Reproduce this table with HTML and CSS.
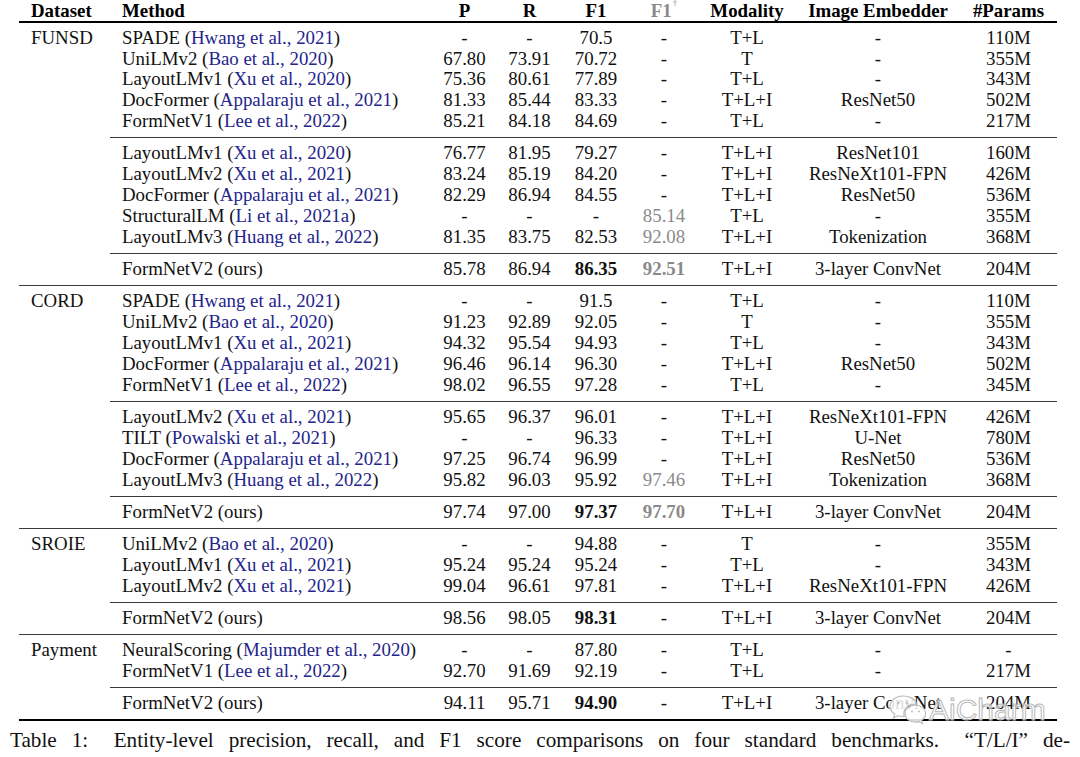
FILE: index.html
```html
<!DOCTYPE html>
<html lang="en">
<head>
<meta charset="utf-8">
<title>Table 1</title>
<link rel="stylesheet" href="styles.css">
</head>
<body>
<div class="page">
  <table class="results">
    <colgroup>
      <col class="c-ds"><col class="c-method"><col class="c-p"><col class="c-r"><col class="c-f1"><col class="c-f1d"><col class="c-mod"><col class="c-emb"><col class="c-par">
    </colgroup>
    <thead>
      <tr>
        <th class="l">Dataset</th><th class="l">Method</th><th>P</th><th>R</th><th>F1</th><th class="gray">F1<sup>†</sup></th><th>Modality</th><th>Image Embedder</th><th>#Params</th>
      </tr>
    </thead>
    <tbody>
      <tr class="first"><td class="l">FUNSD</td><td class="l">SPADE (<span class="cite">Hwang et al., 2021</span>)</td><td>-</td><td>-</td><td>70.5</td><td>-</td><td>T+L</td><td>-</td><td>110M</td></tr>
      <tr><td></td><td class="l">UniLMv2 (<span class="cite">Bao et al., 2020</span>)</td><td>67.80</td><td>73.91</td><td>70.72</td><td>-</td><td>T</td><td>-</td><td>355M</td></tr>
      <tr><td></td><td class="l">LayoutLMv1 (<span class="cite">Xu et al., 2020</span>)</td><td>75.36</td><td>80.61</td><td>77.89</td><td>-</td><td>T+L</td><td>-</td><td>343M</td></tr>
      <tr><td></td><td class="l">DocFormer (<span class="cite">Appalaraju et al., 2021</span>)</td><td>81.33</td><td>85.44</td><td>83.33</td><td>-</td><td>T+L+I</td><td>ResNet50</td><td>502M</td></tr>
      <tr class="cmid"><td></td><td class="l">FormNetV1 (<span class="cite">Lee et al., 2022</span>)</td><td>85.21</td><td>84.18</td><td>84.69</td><td>-</td><td>T+L</td><td>-</td><td>217M</td></tr>

      <tr class="after"><td></td><td class="l">LayoutLMv1 (<span class="cite">Xu et al., 2020</span>)</td><td>76.77</td><td>81.95</td><td>79.27</td><td>-</td><td>T+L+I</td><td>ResNet101</td><td>160M</td></tr>
      <tr><td></td><td class="l">LayoutLMv2 (<span class="cite">Xu et al., 2021</span>)</td><td>83.24</td><td>85.19</td><td>84.20</td><td>-</td><td>T+L+I</td><td>ResNeXt101-FPN</td><td>426M</td></tr>
      <tr><td></td><td class="l">DocFormer (<span class="cite">Appalaraju et al., 2021</span>)</td><td>82.29</td><td>86.94</td><td>84.55</td><td>-</td><td>T+L+I</td><td>ResNet50</td><td>536M</td></tr>
      <tr><td></td><td class="l">StructuralLM (<span class="cite">Li et al., 2021a</span>)</td><td>-</td><td>-</td><td>-</td><td class="gray">85.14</td><td>T+L</td><td>-</td><td>355M</td></tr>
      <tr class="cmid"><td></td><td class="l">LayoutLMv3 (<span class="cite">Huang et al., 2022</span>)</td><td>81.35</td><td>83.75</td><td>82.53</td><td class="gray">92.08</td><td>T+L+I</td><td>Tokenization</td><td>368M</td></tr>

      <tr class="after full"><td></td><td class="l">FormNetV2 (ours)</td><td>85.78</td><td>86.94</td><td class="b">86.35</td><td class="gray b">92.51</td><td>T+L+I</td><td>3-layer ConvNet</td><td>204M</td></tr>

      <tr class="after"><td class="l">CORD</td><td class="l">SPADE (<span class="cite">Hwang et al., 2021</span>)</td><td>-</td><td>-</td><td>91.5</td><td>-</td><td>T+L</td><td>-</td><td>110M</td></tr>
      <tr><td></td><td class="l">UniLMv2 (<span class="cite">Bao et al., 2020</span>)</td><td>91.23</td><td>92.89</td><td>92.05</td><td>-</td><td>T</td><td>-</td><td>355M</td></tr>
      <tr><td></td><td class="l">LayoutLMv1 (<span class="cite">Xu et al., 2021</span>)</td><td>94.32</td><td>95.54</td><td>94.93</td><td>-</td><td>T+L</td><td>-</td><td>343M</td></tr>
      <tr><td></td><td class="l">DocFormer (<span class="cite">Appalaraju et al., 2021</span>)</td><td>96.46</td><td>96.14</td><td>96.30</td><td>-</td><td>T+L+I</td><td>ResNet50</td><td>502M</td></tr>
      <tr class="cmid"><td></td><td class="l">FormNetV1 (<span class="cite">Lee et al., 2022</span>)</td><td>98.02</td><td>96.55</td><td>97.28</td><td>-</td><td>T+L</td><td>-</td><td>345M</td></tr>

      <tr class="after"><td></td><td class="l">LayoutLMv2 (<span class="cite">Xu et al., 2021</span>)</td><td>95.65</td><td>96.37</td><td>96.01</td><td>-</td><td>T+L+I</td><td>ResNeXt101-FPN</td><td>426M</td></tr>
      <tr><td></td><td class="l">TILT (<span class="cite">Powalski et al., 2021</span>)</td><td>-</td><td>-</td><td>96.33</td><td>-</td><td>T+L+I</td><td>U-Net</td><td>780M</td></tr>
      <tr><td></td><td class="l">DocFormer (<span class="cite">Appalaraju et al., 2021</span>)</td><td>97.25</td><td>96.74</td><td>96.99</td><td>-</td><td>T+L+I</td><td>ResNet50</td><td>536M</td></tr>
      <tr class="cmid"><td></td><td class="l">LayoutLMv3 (<span class="cite">Huang et al., 2022</span>)</td><td>95.82</td><td>96.03</td><td>95.92</td><td class="gray">97.46</td><td>T+L+I</td><td>Tokenization</td><td>368M</td></tr>

      <tr class="after full"><td></td><td class="l">FormNetV2 (ours)</td><td>97.74</td><td>97.00</td><td class="b">97.37</td><td class="gray b">97.70</td><td>T+L+I</td><td>3-layer ConvNet</td><td>204M</td></tr>

      <tr class="after"><td class="l">SROIE</td><td class="l">UniLMv2 (<span class="cite">Bao et al., 2020</span>)</td><td>-</td><td>-</td><td>94.88</td><td>-</td><td>T</td><td>-</td><td>355M</td></tr>
      <tr><td></td><td class="l">LayoutLMv1 (<span class="cite">Xu et al., 2021</span>)</td><td>95.24</td><td>95.24</td><td>95.24</td><td>-</td><td>T+L</td><td>-</td><td>343M</td></tr>
      <tr class="cmid"><td></td><td class="l">LayoutLMv2 (<span class="cite">Xu et al., 2021</span>)</td><td>99.04</td><td>96.61</td><td>97.81</td><td>-</td><td>T+L+I</td><td>ResNeXt101-FPN</td><td>426M</td></tr>

      <tr class="after full"><td></td><td class="l">FormNetV2 (ours)</td><td>98.56</td><td>98.05</td><td class="b">98.31</td><td>-</td><td>T+L+I</td><td>3-layer ConvNet</td><td>204M</td></tr>

      <tr class="after"><td class="l">Payment</td><td class="l">NeuralScoring (<span class="cite">Majumder et al., 2020</span>)</td><td>-</td><td>-</td><td>87.80</td><td>-</td><td>T+L</td><td>-</td><td>-</td></tr>
      <tr class="cmid"><td></td><td class="l">FormNetV1 (<span class="cite">Lee et al., 2022</span>)</td><td>92.70</td><td>91.69</td><td>92.19</td><td>-</td><td>T+L</td><td>-</td><td>217M</td></tr>

      <tr class="after bottom"><td></td><td class="l">FormNetV2 (ours)</td><td>94.11</td><td>95.71</td><td class="b">94.90</td><td>-</td><td>T+L+I</td><td>3-layer ConvNet</td><td>204M</td></tr>
    </tbody>
  </table>

  <p class="caption">Table 1:&ensp; Entity-level precision, recall, and F1 score comparisons on four standard benchmarks.&ensp; “T/L/I” de-</p>

  <div class="watermark" aria-hidden="true">
    <svg class="wm-icon" width="40" height="34" viewBox="0 0 40 34">
      <path d="M15 3C7.8 3 2 7.6 2 13.3c0 3.2 1.8 6 4.7 7.9L5.5 25l4.4-2.3c1.6.5 3.3.7 5.1.7.4 0 .8 0 1.2-.1-.3-.9-.4-1.8-.4-2.8 0-5.4 5.2-9.700 11.6-9.7h.9C27.3 6.1 21.7 3 15 3z" fill="rgba(255,255,255,0.85)" stroke="#bdbdbd" stroke-width="1.2"/>
      <path d="M27.4 12.1c-5.8 0-10.4 3.8-10.4 8.5s4.6 8.5 10.4 8.5c1.3 0 2.5-.2 3.6-.5l3.5 1.9-1-3.1c2.5-1.6 4.1-4 4.1-6.8 0-4.7-4.5-8.5-10.2-8.5z" fill="rgba(255,255,255,0.85)" stroke="#bdbdbd" stroke-width="1.2"/>
      <circle cx="10.5" cy="10" r="1.4" fill="#c4c4c4"/>
      <circle cx="19" cy="10" r="1.4" fill="#c4c4c4"/>
      <circle cx="24" cy="18.5" r="1.1" fill="#c4c4c4"/>
      <circle cx="31" cy="18.5" r="1.1" fill="#c4c4c4"/>
    </svg>
    <span class="wm-text">AiCharm</span>
  </div>
</div>
</body>
</html>
```

FILE: styles.css
```css
html, body {
  margin: 0;
  padding: 0;
  background: #ffffff;
}

body {
  font-family: "Liberation Serif", "Times New Roman", serif;
  color: #111;
}

.page {
  position: relative;
  width: 1060px;
  padding: 0 10px;
}

.results {
  margin-left: 9px;
  width: 1038px;
  table-layout: fixed;
  border-collapse: separate;
  border-spacing: 0;
  font-size: 18.85px;
  line-height: 20.9px;
}

.c-ds { width: 91px; }
.c-method { width: 322px; }
.c-p { width: 65px; }
.c-r { width: 65px; }
.c-f1 { width: 68px; }
.c-f1d { width: 68px; }
.c-mod { width: 98px; }
.c-emb { width: 164px; }
.c-par { width: 97px; }

.results th,
.results td {
  padding: 0;
  text-align: center;
  white-space: nowrap;
  vertical-align: top;
}

.results th {
  font-weight: bold;
  line-height: 21px;
  border-bottom: 2px solid #000;
  color: #000;
}

.results .l {
  text-align: left;
  padding-left: 12px;
}

.results sup {
  font-size: 9px;
  font-weight: normal;
  vertical-align: top;
  line-height: 9px;
  position: relative;
  top: -1px;
  margin-left: 1px;
}

.cite {
  color: #24248c;
}

.gray {
  color: #8a8a8a;
}

.results th.gray {
  color: #8a8a8a;
}

.b {
  font-weight: bold;
}

.results tr.first td {
  padding-top: 4.6px;
}

.results tr.after td {
  padding-top: 5.1px;
}

.results tr.cmid td,
.results tr.full td,
.results tr.bottom td {
  padding-bottom: 5.1px;
}

.results tr.cmid td + td {
  border-bottom: 1px solid #3a3a3a;
}

.results tr.full td {
  border-bottom: 1px solid #3a3a3a;
}

.results tr.bottom td {
  border-bottom: 2px solid #000;
}

.caption {
  margin: 7px 0 0 0;
  font-size: 21.2px;
  line-height: 24px;
  text-align: justify;
  text-align-last: justify;
  color: #111;
}

.watermark {
  position: absolute;
  left: 888px;
  top: 693px;
  display: flex;
  align-items: center;
  gap: 1px;
  pointer-events: none;
}

.wm-text {
  font-family: "Liberation Sans", Arial, sans-serif;
  font-size: 30px;
  line-height: 30px;
  color: rgba(255, 255, 255, 0.55);
  -webkit-text-stroke: 1px #b8b8b8;
}
```
